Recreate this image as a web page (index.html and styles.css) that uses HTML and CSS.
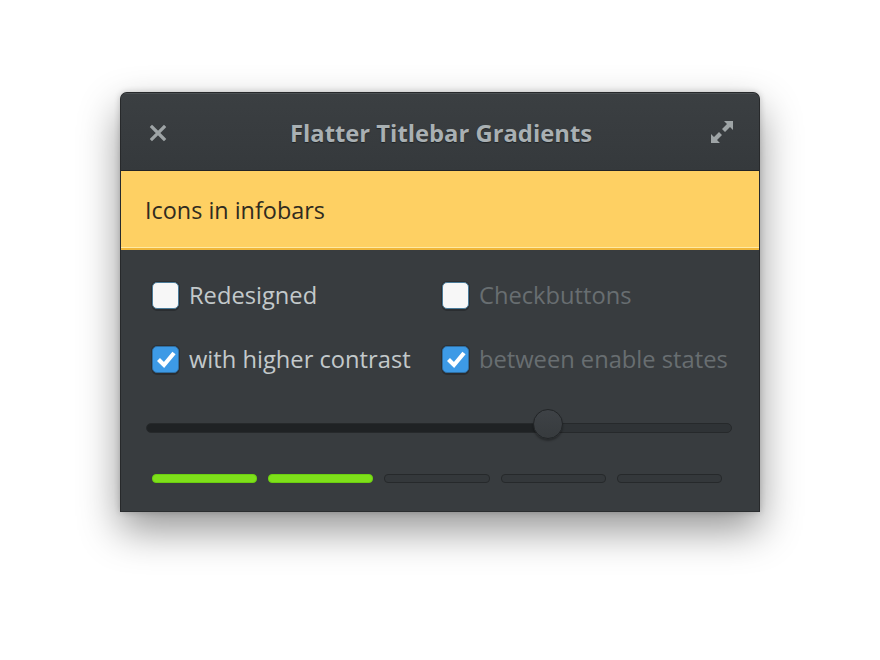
FILE: index.html
```html
<!DOCTYPE html>
<html lang="en">
<head>
    <meta charset="UTF-8">
    <title>Flatter Titlebar Gradients</title>
    <link rel="stylesheet" href="styles.css">
</head>
<body>
    <div class="window">
        <div class="titlebar">
            <svg class="close" width="18" height="18" viewBox="0 0 18 18">
                <path d="M3 3 L15 15 M15 3 L3 15" stroke="#9ea4a6" stroke-width="3.2" stroke-linecap="square"/>
            </svg>
            <div class="title">Flatter Titlebar Gradients</div>
            <svg class="maximize" width="26" height="26" viewBox="0 0 26 26">
                <path d="M15 2 H24 V11 L21 8 L16 13 L13 10 L18 5 Z" fill="#9ea4a6"/>
                <path d="M11 24 H2 V15 L5 18 L10 13 L13 16 L8 21 Z" fill="#9ea4a6"/>
            </svg>
        </div>

        <div class="infobar">Icons in infobars</div>

        <div class="content">
            <div class="checks">
                <label class="check"><span class="box"></span>Redesigned</label>
                <label class="check disabled"><span class="box"></span>Checkbuttons</label>
                <label class="check"><span class="box checked">
                    <svg width="24" height="24" viewBox="0 0 24 24"><path d="M4.5 12.5 L10 18 L20 6" fill="none" stroke="#fff" stroke-width="4.2"/></svg>
                </span>with higher contrast</label>
                <label class="check disabled"><span class="box checked">
                    <svg width="24" height="24" viewBox="0 0 24 24"><path d="M4.5 12.5 L10 18 L20 6" fill="none" stroke="#fff" stroke-width="4.2"/></svg>
                </span>between enable states</label>
            </div>

            <div class="slider">
                <div class="fill" style="width: 401px"></div>
                <div class="knob"></div>
            </div>

            <div class="levelbar">
                <div class="seg on"></div>
                <div class="seg on"></div>
                <div class="seg"></div>
                <div class="seg"></div>
                <div class="seg"></div>
            </div>
        </div>
    </div>
</body>
</html>
```

FILE: styles.css
```css
html {
    background: #ffffff;
}
body {
    margin: 0;
    min-height: 660px;
    box-sizing: border-box;
    padding: 92px 0 0 120px;
    font-family: "Open Sans", "DejaVu Sans", sans-serif;
}
.window {
    width: 640px;
    height: 420px;
    box-sizing: border-box;
    background: #383c3f;
    border: 1px solid #27292b;
    border-bottom-color: #2a2d2f;
    border-radius: 7px 7px 0 0;
    box-shadow: 0 18px 40px rgba(0,0,0,0.42), 0 0 6px rgba(0,0,0,0.2);
    overflow: hidden;
}
.titlebar {
    height: 78px;
    box-sizing: border-box;
    display: flex;
    align-items: center;
    padding: 0 24px 0 28px;
    background: linear-gradient(#3b3f42, #35393c);
    border-top: 1px solid #4b5053;
    border-bottom: 1px solid #222426;
}
.close {
    flex: none;
    margin-top: 2px;
}
.title {
    flex: 1;
    text-align: center;
    color: #a9b0b3;
    font-weight: bold;
    font-size: 23.8px;
    text-shadow: 0 1px 1px #1f2224;
    padding: 2px 0 0 6px;
}
.maximize {
    flex: none;
}
.infobar {
    height: 79px;
    box-sizing: border-box;
    display: flex;
    align-items: center;
    padding: 0 24px 0;
    background: #fed063;
    border-bottom: 2px solid #f0b63a;
    box-shadow: inset 0 -1px 0 #ffe9a2;
    color: #302b20;
    font-size: 23.4px;
}
.content {
    padding: 31px 26px 0 25px;
}
.checks {
    display: grid;
    grid-template-columns: 290px 1fr;
    row-gap: 36px;
    padding-left: 6px;
}
.check {
    display: flex;
    align-items: center;
    height: 28px;
    color: #c3c9cb;
    font-size: 23.7px;
}
.check.disabled {
    color: #686e71;
}
.box {
    width: 27px;
    height: 27px;
    box-sizing: border-box;
    margin-right: 10px;
    border-radius: 5px;
    background: #f7f7f7;
    border: 1px solid #4a7b99;
    box-shadow: 0 2px 0 #2a2d30, 0 0 0 1px #2d3033;
    display: flex;
    align-items: center;
    justify-content: center;
}
.box.checked {
    background: #3d9ae6;
    border-color: #2f6fa3;
}
.slider {
    position: relative;
    margin: 50px 0 0 0;
    height: 10px;
    width: 586px;
    box-sizing: border-box;
    border-radius: 5px;
    background: #2f3336;
    border: 1px solid #26292b;
}
.fill {
    height: 100%;
    border-radius: 5px 0 0 5px;
    background: #1f2224;
}
.knob {
    position: absolute;
    left: 386px;
    top: -15px;
    width: 30px;
    height: 30px;
    box-sizing: border-box;
    border-radius: 50%;
    background: linear-gradient(#3e4246, #373b3e);
    border: 1px solid #222527;
    box-shadow: 0 2px 2px rgba(0,0,0,0.3);
}
.levelbar {
    display: flex;
    gap: 11px;
    margin: 41px 0 0 6px;
    width: 570px;
}
.seg {
    flex: 1;
    height: 9px;
    box-sizing: border-box;
    border-radius: 4px;
    background: #34383b;
    border: 1px solid #26292b;
}
.seg.on {
    background: #7ee01a;
    border-color: #6bcf0f;
}
```
